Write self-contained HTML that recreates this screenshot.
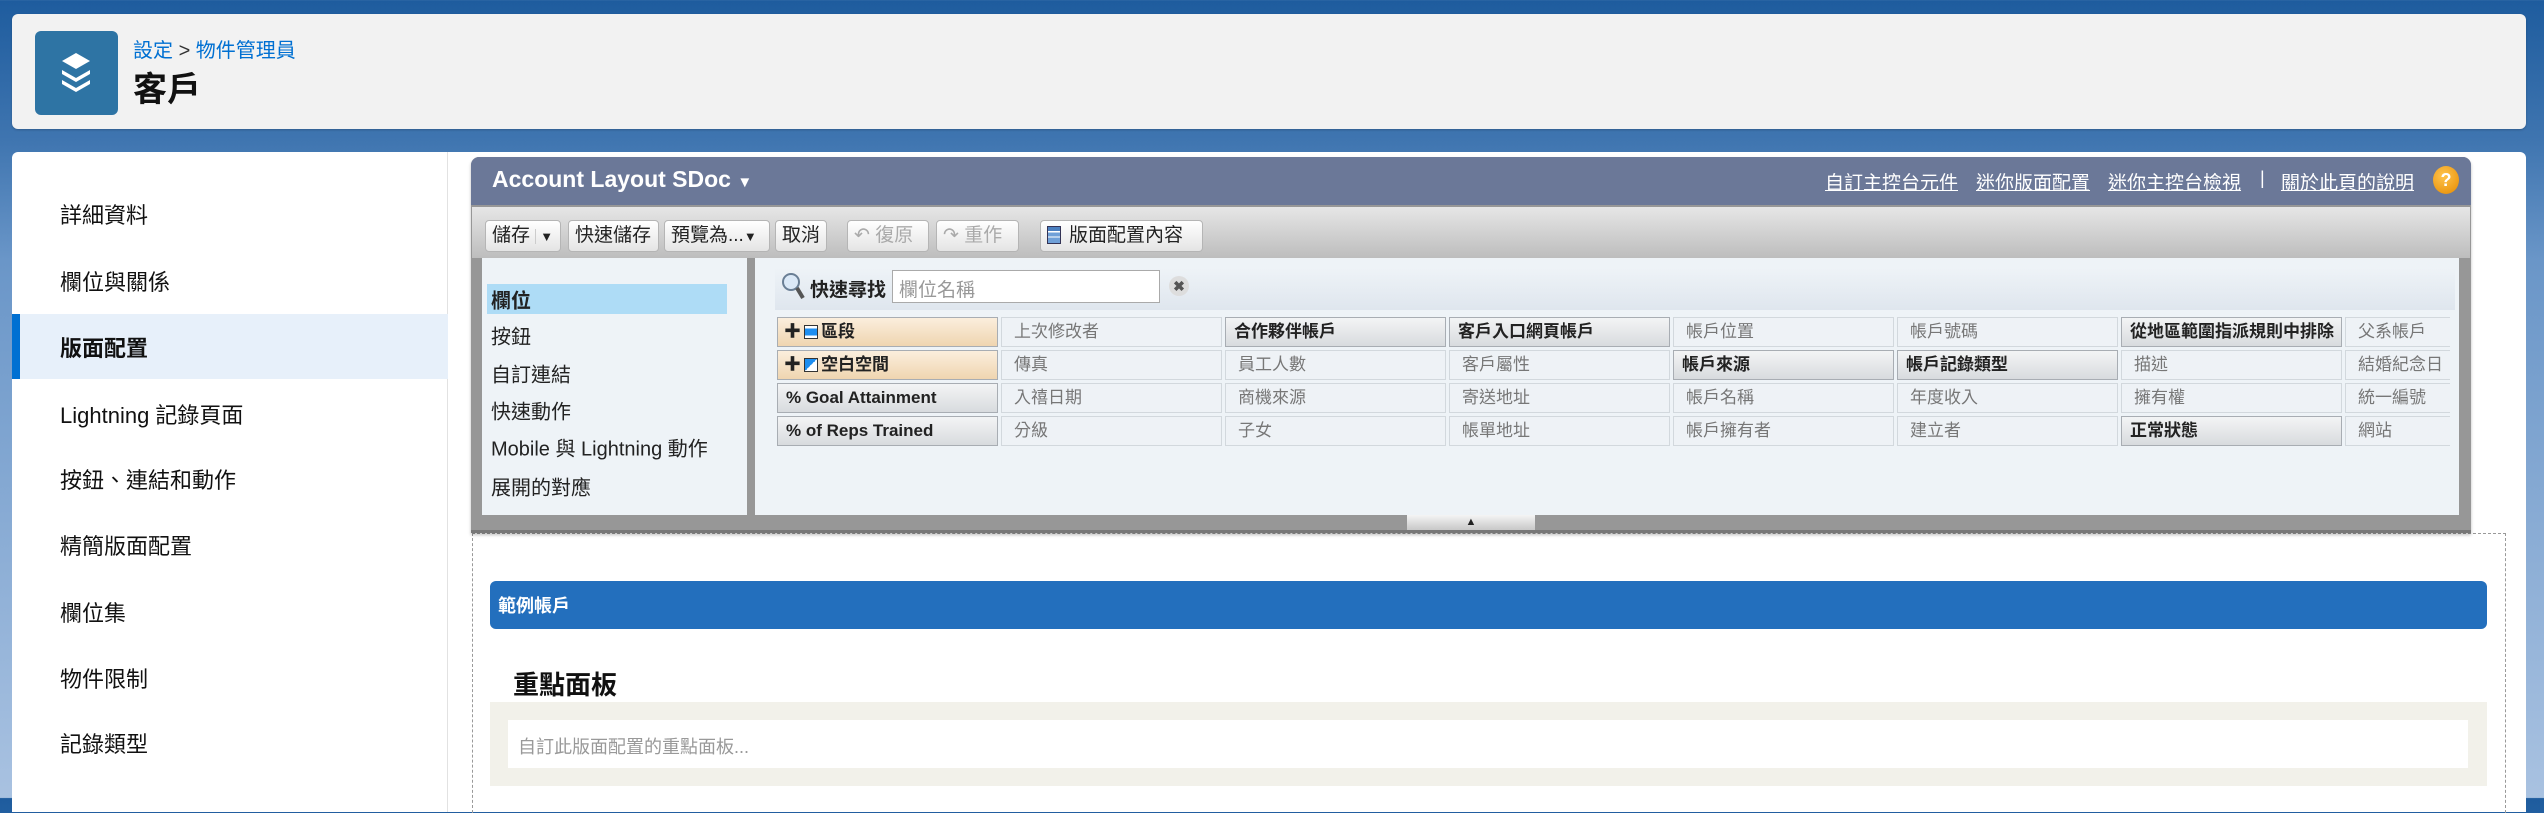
<!DOCTYPE html>
<html><head><meta charset="utf-8"><style>
*{box-sizing:border-box;margin:0;padding:0}
body{width:2544px;height:798px;overflow:hidden;position:relative;font-family:"Liberation Sans","Noto Sans CJK TC",sans-serif;background:linear-gradient(#1e5c9e 0px,#3f75b0 140px,#6a96c8 260px,#a9c2e1 800px)}
.abs{position:absolute}
.hdr{left:12px;top:14px;width:2514px;height:115px;background:#f2f2f2;border-radius:6px;box-shadow:0 1px 2px rgba(0,0,0,.2)}
.icon{left:35px;top:31px;width:83px;height:84px;background:#2e74a4;border-radius:6px}
.main{left:12px;top:152px;width:2514px;height:660px;background:#fff;border-radius:6px 6px 0 0}
.nav{left:12px;top:152px;width:436px;height:660px;border-right:1px solid #e2e2e2}
.ni{position:absolute;left:60px;font-size:22px;color:#111;transform:translateY(-50%)}
.btn{position:absolute;top:220px;height:32px;border:1px solid #b5b5b5;border-radius:4px;background:linear-gradient(#fff,#e4e4e4);font-size:19px;line-height:30px;padding-left:6px;color:#222}
.dis{color:#aaa}
.cell{position:absolute;height:30px;border:1px solid #d2d8dd;background:#eef2f6;font-size:17px;line-height:28px;padding-left:12px;color:#777;white-space:nowrap;overflow:hidden}
.b{background:linear-gradient(#f3f4f5,#d8dbde);border-color:#a8adb3;color:#222;font-weight:bold;padding-left:8px}
.o{background:linear-gradient(#fbeedd,#efd5b0);border-color:#a8adb3;color:#222;font-weight:bold;padding-left:6px}
.lk{position:absolute;top:168px;font-size:19px;color:#fff;text-decoration:underline}
.li{position:absolute;left:491px;font-size:20px;color:#222;transform:translateY(-50%)}
</style></head><body>
<div class="abs hdr"></div>
<div class="abs icon"><svg width="83" height="84" viewBox="0 0 83 84"><path d="M41 22 L55 30 L41 38 L27 30Z" fill="#fff"/><path d="M27 39 L41 47 L55 39 L55 43 L41 51 L27 43Z" fill="#fff"/><path d="M27 49 L41 57 L55 49 L55 53 L41 61 L27 53Z" fill="#fff"/></svg></div>
<div class="abs" style="left:133px;top:34px;font-size:20px;color:#0070d2">設定 <span style="color:#333">&gt;</span> 物件管理員</div>
<div class="abs" style="left:133px;top:62px;font-size:34px;font-weight:bold;color:#111">客戶</div>
<div class="abs main"></div>
<div class="abs nav"></div>
<div class="abs" style="left:12px;top:314px;width:436px;height:65px;background:#e7f0fa"></div>
<div class="abs" style="left:12px;top:314px;width:8px;height:65px;background:#0070d2"></div>
<div class="ni" style="top:214px">詳細資料</div>
<div class="ni" style="top:281px">欄位與關係</div>
<div class="ni" style="top:347px;font-weight:bold">版面配置</div>
<div class="ni" style="top:414px">Lightning 記錄頁面</div>
<div class="ni" style="top:479px">按鈕、連結和動作</div>
<div class="ni" style="top:545px">精簡版面配置</div>
<div class="ni" style="top:612px">欄位集</div>
<div class="ni" style="top:678px">物件限制</div>
<div class="ni" style="top:743px">記錄類型</div>

<div class="abs" style="left:472px;top:533px;width:2034px;height:280px;border:1px dashed #999;border-bottom:none"></div>

<div class="abs" style="left:471px;top:157px;width:2000px;height:376px;background:#979797;border-radius:8px 8px 0 0;box-shadow:0 2px 3px rgba(0,0,0,.25)"></div>
<div class="abs" style="left:471px;top:157px;width:2000px;height:48px;background:#6b7898;border-radius:8px 8px 0 0"></div>
<div class="abs" style="left:492px;top:166px;font-size:23px;font-weight:bold;color:#fff">Account Layout SDoc <span style="font-size:15px">▼</span></div>
<div class="lk" style="left:1825px">自訂主控台元件</div>
<div class="lk" style="left:1976px">迷你版面配置</div>
<div class="lk" style="left:2108px">迷你主控台檢視</div>
<div class="abs" style="left:2260px;top:168px;font-size:18px;color:#fff">|</div>
<div class="lk" style="left:2281px">關於此頁的說明</div>
<div class="abs" style="left:2433px;top:166px;width:26px;height:28px;border-radius:50%;background:radial-gradient(circle at 40% 35%,#ffc44d,#e58a00);color:#fff;font-size:18px;font-weight:bold;text-align:center;line-height:28px">?</div>
<div class="abs" style="left:472px;top:207px;width:1998px;height:51px;background:linear-gradient(#e6e6e6,#bdbdbd)"></div>
<div class="btn" style="left:485px;width:76px">儲存 <span style="font-size:13px;border-left:1px solid #ccc;padding-left:4px">▼</span></div>
<div class="btn" style="left:568px;width:91px">快速儲存</div>
<div class="btn" style="left:664px;width:106px">預覽為...<span style="font-size:13px">▼</span></div>
<div class="btn" style="left:775px;width:52px">取消</div>
<div class="btn dis" style="left:847px;width:82px">↶ 復原</div>
<div class="btn dis" style="left:936px;width:83px">↷ 重作</div>
<div class="btn" style="left:1040px;width:163px"><span style="display:inline-block;width:14px;height:18px;background:linear-gradient(#4a7fc0 0 25%,#fff 25% 33%,#6fa0d8 33% 58%,#fff 58% 66%,#6fa0d8 66%);border:1px solid #335;vertical-align:-3px;margin-right:8px"></span>版面配置內容</div>
<div class="abs" style="left:482px;top:258px;width:265px;height:257px;background:#eef3f7"></div>
<div class="abs" style="left:755px;top:258px;width:1704px;height:257px;background:#eef3f7"></div>
<div class="abs" style="left:487px;top:284px;width:240px;height:30px;background:#aedcf6"></div>
<div class="li" style="top:299px;font-weight:bold">欄位</div>
<div class="li" style="top:335px">按鈕</div>
<div class="li" style="top:373px">自訂連結</div>
<div class="li" style="top:410px">快速動作</div>
<div class="li" style="top:447px">Mobile 與 Lightning 動作</div>
<div class="li" style="top:486px">展開的對應</div>
<div class="abs" style="left:775px;top:268px;width:1680px;height:42px;background:linear-gradient(#eef3f7,#dfe6ee)"></div>
<svg class="abs" style="left:780px;top:271px" width="26" height="30"><circle cx="11" cy="11" r="8" fill="#dbe9f7" stroke="#6a7f95" stroke-width="2"/><path d="M17 17 L23 27" stroke="#555" stroke-width="4"/></svg>
<div class="abs" style="left:810px;top:275px;font-size:19px;color:#222;font-weight:bold">快速尋找</div>
<div class="abs" style="left:892px;top:270px;width:268px;height:33px;background:#fff;border:1px solid #aaa;font-size:19px;color:#999;padding:4px 6px">欄位名稱</div>
<div class="abs" style="left:1169px;top:276px;width:20px;height:20px;border-radius:50%;background:#ddd;color:#555;font-size:14px;text-align:center;line-height:20px;font-weight:bold">✖</div>

<div class="cell o" style="left:777px;top:317px;width:221px">✚<span style="display:inline-block;width:14px;height:14px;border:1px solid #333;background:linear-gradient(#fff 20%,#1e8ef0 20% 80%,#fff 80%);margin:0 3px;vertical-align:-2px"></span>區段</div>
<div class="cell o" style="left:777px;top:350px;width:221px">✚<span style="display:inline-block;width:14px;height:14px;border:1px solid #333;background:linear-gradient(135deg,#1e8ef0 50%,#fff 50%);margin:0 3px;vertical-align:-2px"></span>空白空間</div>
<div class="cell b" style="left:777px;top:383px;width:221px">% Goal Attainment</div>
<div class="cell b" style="left:777px;top:416px;width:221px">% of Reps Trained</div>

<div class="cell" style="left:1001px;top:317px;width:221px">上次修改者</div>
<div class="cell" style="left:1001px;top:350px;width:221px">傳真</div>
<div class="cell" style="left:1001px;top:383px;width:221px">入禧日期</div>
<div class="cell" style="left:1001px;top:416px;width:221px">分級</div>

<div class="cell b" style="left:1225px;top:317px;width:221px">合作夥伴帳戶</div>
<div class="cell" style="left:1225px;top:350px;width:221px">員工人數</div>
<div class="cell" style="left:1225px;top:383px;width:221px">商機來源</div>
<div class="cell" style="left:1225px;top:416px;width:221px">子女</div>

<div class="cell b" style="left:1449px;top:317px;width:221px">客戶入口網頁帳戶</div>
<div class="cell" style="left:1449px;top:350px;width:221px">客戶屬性</div>
<div class="cell" style="left:1449px;top:383px;width:221px">寄送地址</div>
<div class="cell" style="left:1449px;top:416px;width:221px">帳單地址</div>

<div class="cell" style="left:1673px;top:317px;width:221px">帳戶位置</div>
<div class="cell b" style="left:1673px;top:350px;width:221px">帳戶來源</div>
<div class="cell" style="left:1673px;top:383px;width:221px">帳戶名稱</div>
<div class="cell" style="left:1673px;top:416px;width:221px">帳戶擁有者</div>

<div class="cell" style="left:1897px;top:317px;width:221px">帳戶號碼</div>
<div class="cell b" style="left:1897px;top:350px;width:221px">帳戶記錄類型</div>
<div class="cell" style="left:1897px;top:383px;width:221px">年度收入</div>
<div class="cell" style="left:1897px;top:416px;width:221px">建立者</div>

<div class="cell b" style="left:2121px;top:317px;width:221px">從地區範圍指派規則中排除</div>
<div class="cell" style="left:2121px;top:350px;width:221px">描述</div>
<div class="cell" style="left:2121px;top:383px;width:221px">擁有權</div>
<div class="cell b" style="left:2121px;top:416px;width:221px">正常狀態</div>

<div class="cell" style="left:2345px;top:317px;width:105px;border-right:none">父系帳戶</div>
<div class="cell" style="left:2345px;top:350px;width:105px;border-right:none">結婚紀念日</div>
<div class="cell" style="left:2345px;top:383px;width:105px;border-right:none">統一編號</div>
<div class="cell" style="left:2345px;top:416px;width:105px;border-right:none">網站</div>

<div class="abs" style="left:1407px;top:515px;width:128px;height:15px;background:linear-gradient(#f4f4f4,#c8c8c8);font-size:11px;text-align:center;line-height:15px;color:#222">▲</div>
<div class="abs" style="left:471px;top:530px;width:2000px;height:3px;background:#777"></div>

<div class="abs" style="left:490px;top:581px;width:1997px;height:48px;background:#236fbd;border-radius:6px"></div>
<div class="abs" style="left:498px;top:592px;font-size:18px;font-weight:bold;color:#fff">範例帳戶</div>
<div class="abs" style="left:513px;top:665px;font-size:26px;font-weight:bold;color:#111">重點面板</div>
<div class="abs" style="left:490px;top:702px;width:1997px;height:84px;background:#f2f1ea"></div>
<div class="abs" style="left:508px;top:720px;width:1960px;height:48px;background:#fff"></div>
<div class="abs" style="left:518px;top:733px;font-size:18px;color:#999">自訂此版面配置的重點面板...</div>
</body></html>
